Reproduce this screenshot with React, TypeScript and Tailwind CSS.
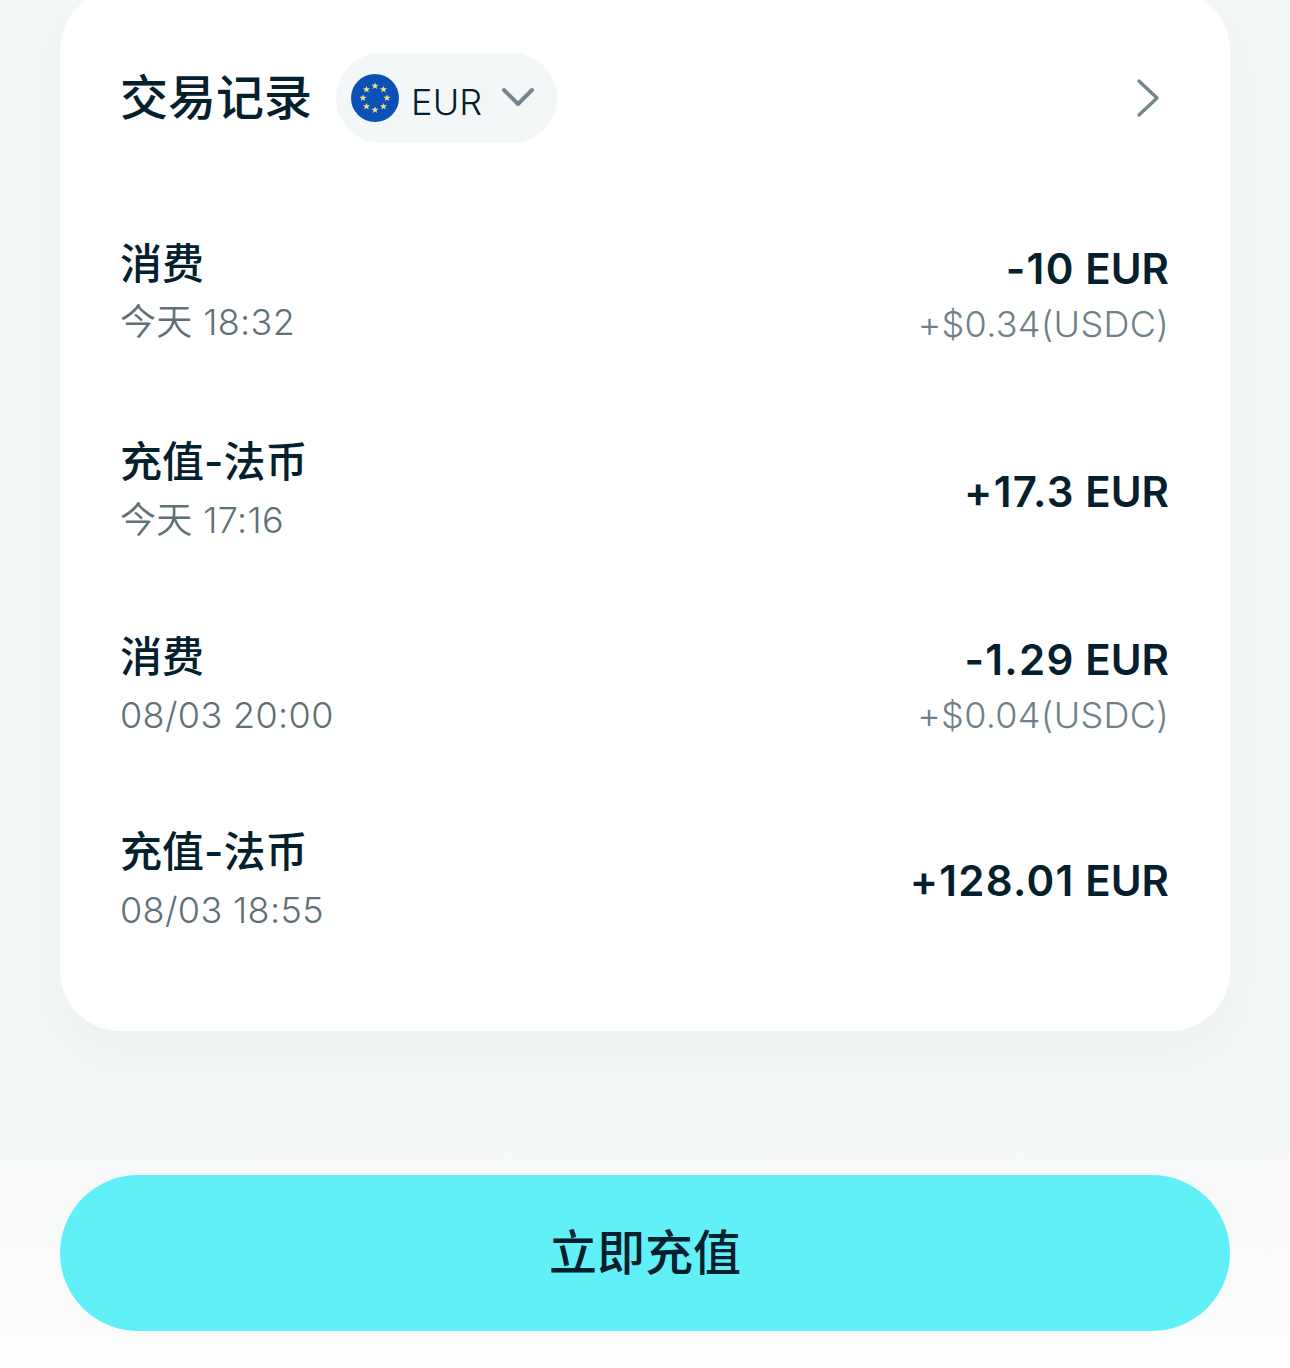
const FONT = "font-['Inter','Noto_Sans_CJK_SC',sans-serif]";

function EuFlag() {
  const stars = Array.from({ length: 8 }, (_, i) => {
    const a = (i * Math.PI * 2) / 8 - Math.PI / 2;
    return [24 + 12 * Math.cos(a), 24 + 12 * Math.sin(a)];
  });
  return (
    <svg width="48" height="48" viewBox="0 0 48 48" className="shrink-0">
      <circle cx="24" cy="24" r="24" fill="#0B50B4" />
      {stars.map(([x, y], i) => (
        <polygon
          key={i}
          transform={`translate(${x} ${y})`}
          fill="#E8DE8C"
          points="0,-3.6 1,-1.2 3.6,-1.2 1.5,0.5 2.3,3.1 0,1.6 -2.3,3.1 -1.5,0.5 -3.6,-1.2 -1,-1.2"
        />
      ))}
    </svg>
  );
}

type Tx = { title: string; time: string; amount: string; sub?: string; h: string; nudge: string };

const rows: Tx[] = [
  { title: "消费", time: "今天 18:32", amount: "-10", sub: "+$0.34(USDC)", h: "h-[199px]", nudge: "-mt-[4px]" },
  { title: "充值-法币", time: "今天 17:16", amount: "+17.3", h: "h-[196px]", nudge: "-mt-[6px]" },
  { title: "消费", time: "08/03 20:00", amount: "-1.29", sub: "+$0.04(USDC)", h: "h-[195px]", nudge: "-mt-[8px]" },
  { title: "充值-法币", time: "08/03 18:55", amount: "+128.01", h: "h-[195px]", nudge: "-mt-[10px]" },
];

export default function App() {
  return (
    <div className={`${FONT} h-[1368px] w-[1290px] overflow-hidden bg-[linear-gradient(to_bottom,#f4f7f8_0%,#f4f7f8_80%,#fdfdfd_100%)] px-[60px] text-[#04202c]`}>
      <section className="-mt-[10px] h-[1041px] rounded-[60px] bg-white px-[60px] pt-[63px] shadow-[0_20px_40px_rgba(10,30,50,0.025)]">
        <header className="flex h-[90px] items-center">
          <h2 className="text-[48px] leading-none font-medium">交易记录</h2>
          <div className="ml-[24px] flex h-[90px] w-[221px] items-center rounded-[45px] bg-[#f4f7f8] pl-[15px]">
            <EuFlag />
            <span className="ml-[12px] mt-[8px] text-[36px] leading-none font-light tracking-[0.2px]">EUR</span>
            <svg width="34" height="22" viewBox="0 0 34 22" className="ml-[19px] -mt-[2px]">
              <path d="M3 4 L17 18 L31 4" fill="none" stroke="#74868c" strokeWidth="4" strokeLinecap="round" strokeLinejoin="round" />
            </svg>
          </div>
          <svg width="24" height="40" viewBox="0 0 24 40" className="ml-auto mr-[10px]">
            <path d="M3 3 L21 20 L3 37" fill="none" stroke="#74868c" strokeWidth="3.4" strokeLinecap="round" strokeLinejoin="round" />
          </svg>
        </header>
        <ul className="mt-[55px]">
          {rows.map((r) => (
            <li key={r.time} className={`flex items-center justify-between ${r.h}`}>
              <div className="-mt-[10px] flex flex-col gap-[13px]">
                <div className="text-[42px] leading-[46px] font-medium">{r.title}</div>
                <div className="text-[36px] leading-[44px] font-[350] tracking-[0.35px] text-[#5f7177]">{r.time}</div>
              </div>
              <div className={`flex flex-col items-end gap-[10px] pr-px ${r.nudge}`}>
                <div className="text-[42px] leading-[46px] font-semibold">
                  <span className="tracking-[1.3px]">{r.amount}</span> EUR
                </div>
                {r.sub && <div className="text-[36px] leading-[44px] font-light tracking-[0.3px] text-[#6f8187]">{r.sub}</div>}
              </div>
            </li>
          ))}
        </ul>
      </section>
      <button className="mt-[144px] flex h-[156px] w-full items-center justify-center rounded-[78px] bg-[#62f0f8] text-[48px] leading-none font-medium">
        立即充值
      </button>
    </div>
  );
}
